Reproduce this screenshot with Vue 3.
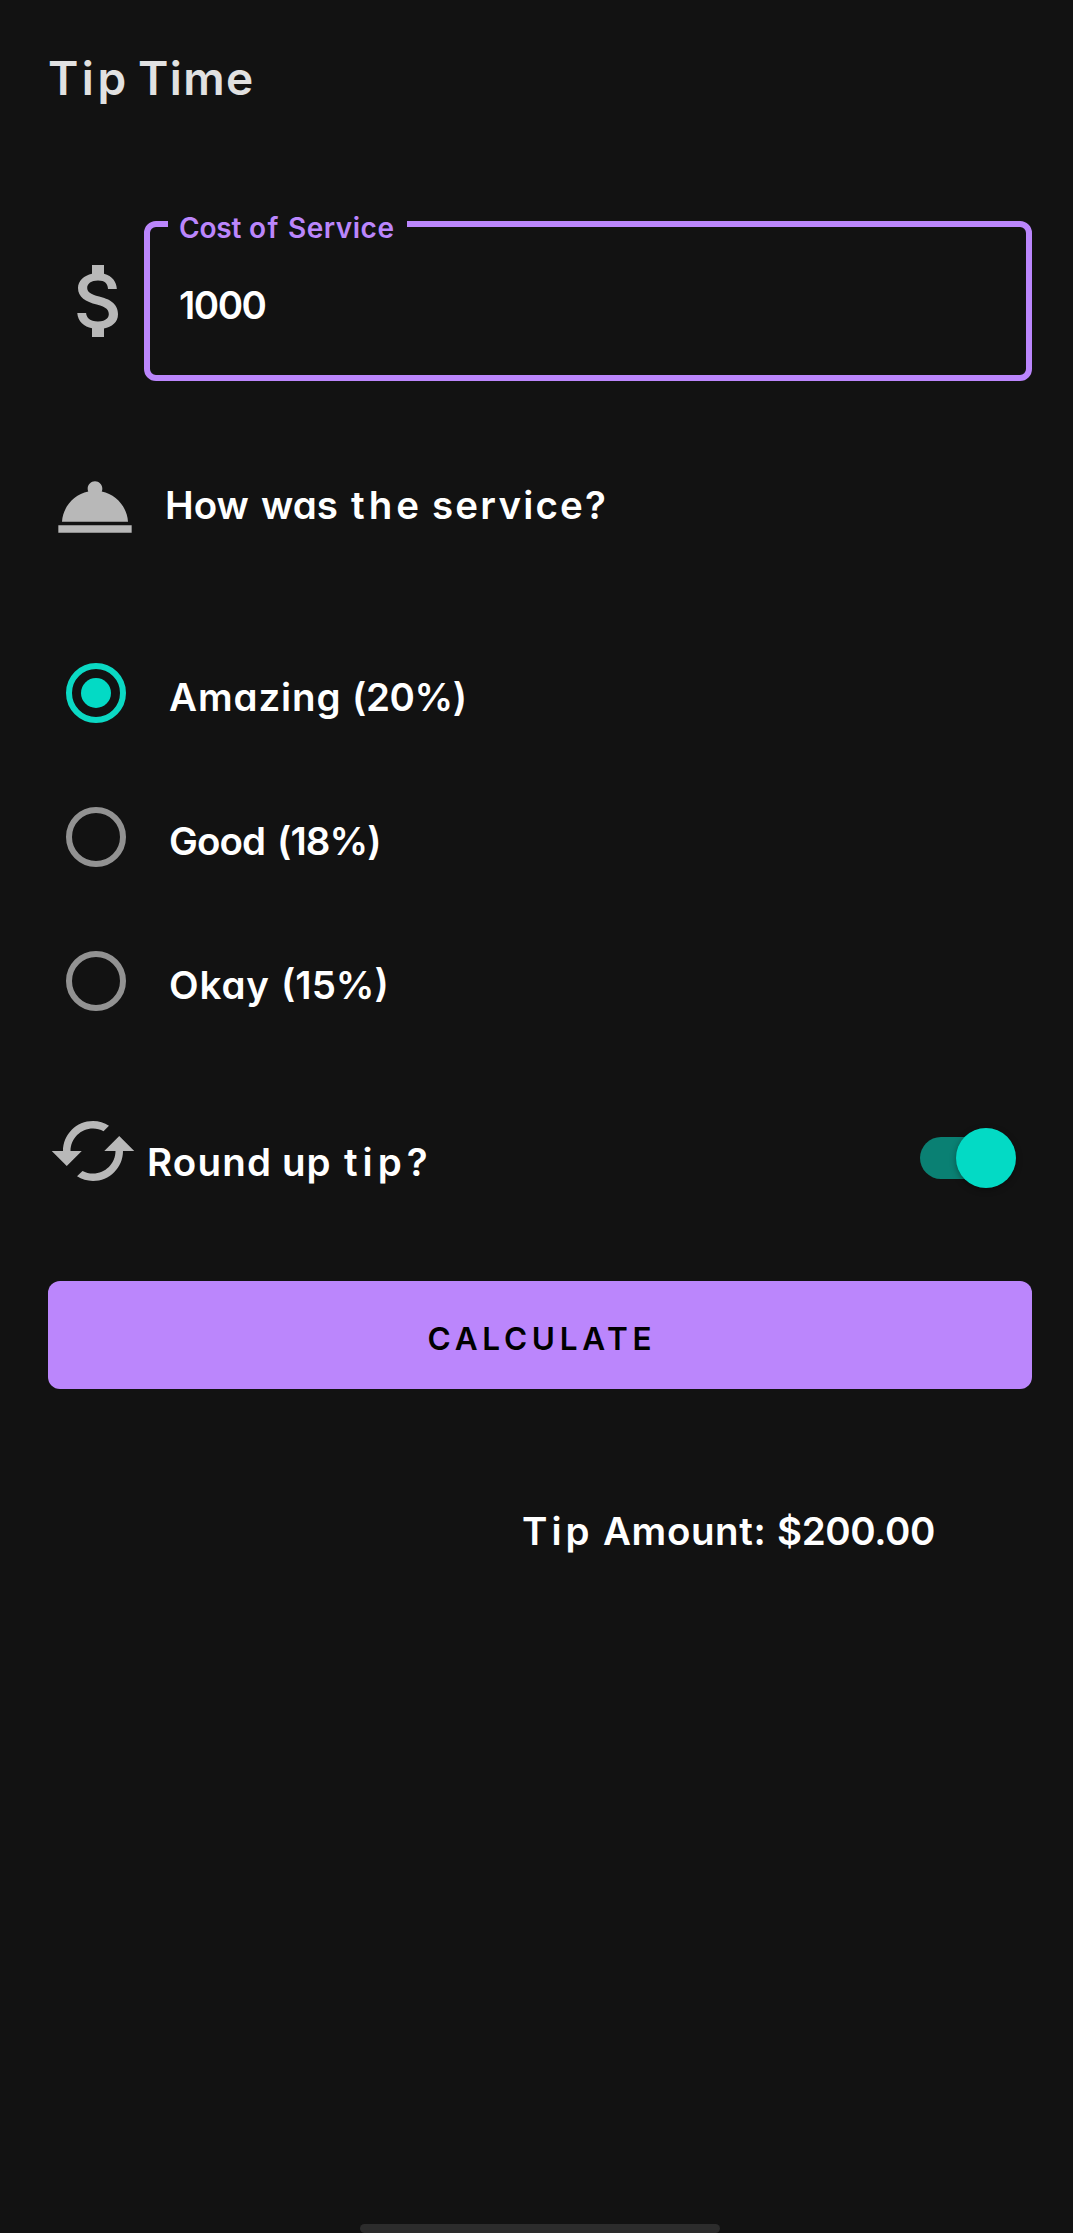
<script setup>
import { ref, h } from 'vue'

// Each word carries its tracking (ls) and the advance to the next word (w).
const Words = (props) =>
  h(
    'span',
    { class: 'words' },
    props.items.map((word, i) => [
      h(
        'span',
        {
          style: {
            display: 'inline-block',
            letterSpacing: `${word.ls}px`,
            width: word.w ? `${word.w}px` : 'auto'
          }
        },
        word.t + (i < props.items.length - 1 ? ' ' : '')
      )
    ])
  )
Words.props = ['items']

const title = [{ t: 'Tip', ls: 3.5, w: 90 }, { t: 'Time', ls: 1.4 }]
const label = [{ t: 'Cost', ls: -0.2, w: 70 }, { t: 'of', ls: 1.5, w: 39 }, { t: 'Service', ls: 0.5 }]
const question = [
  { t: 'How', ls: 0, w: 96 },
  { t: 'was', ls: 0, w: 90 },
  { t: 'the', ls: 4, w: 81 },
  { t: 'service?', ls: 2.2 }
]
const options = [
  { id: 'amazing', words: [{ t: 'Amazing', ls: 0.9, w: 183 }, { t: '(20%)', ls: -0.4 }] },
  { id: 'good', words: [{ t: 'Good', ls: -0.9, w: 108 }, { t: '(18%)', ls: -0.9 }] },
  { id: 'okay', words: [{ t: 'Okay', ls: 0.9, w: 112 }, { t: '(15%)', ls: 0 }] }
]
const roundUp = [{ t: 'Round', ls: 1.2, w: 135 }, { t: 'up', ls: 1, w: 62 }, { t: 'tip?', ls: 5 }]
const result = [
  { t: 'Tip', ls: 4, w: 81 },
  { t: 'Amount:', ls: 0.6, w: 174 },
  { t: '$200.00', ls: -0.4 }
]

const selected = ref('amazing')
const rounded = ref(true)
</script>

<template>
  <main class="screen">
    <h1 class="title"><Words :items="title" /></h1>

    <section class="cost">
      <svg class="dollar" viewBox="0 0 24 24">
        <path d="M11.8 10.9c-2.27-.59-3-1.2-3-2.15 0-1.09 1.01-1.85 2.7-1.85 1.78 0 2.44.85 2.5 2.1h2.21c-.07-1.72-1.12-3.3-3.21-3.81V3h-3v2.16c-1.94.42-3.5 1.68-3.5 3.61 0 2.31 1.91 3.46 4.7 4.13 2.5.6 3 1.48 3 2.41 0 .69-.49 1.79-2.7 1.79-2.06 0-2.87-.92-2.98-2.1h-2.2c.12 2.19 1.76 3.42 3.68 3.83V21h3v-2.15c1.95-.37 3.5-1.5 3.5-3.55 0-2.84-2.43-3.81-4.7-4.4z" />
      </svg>
      <div class="field">
        <span class="label"><Words :items="label" /></span>
        <span class="value">1000</span>
      </div>
    </section>

    <section class="service">
      <svg class="bell" viewBox="0 0 24 24">
        <path d="M2 17h20v2H2zM13.84 7.79c.1-.24.16-.51.16-.79 0-1.1-.9-2-2-2s-2 .9-2 2c0 .28.06.55.16.79C6.25 8.6 3.27 11.93 3 16h18c-.27-4.07-3.25-7.4-7.16-8.21z" />
      </svg>
      <span class="question"><Words :items="question" /></span>
    </section>

    <section class="options">
      <div v-for="o in options" :key="o.id" class="option" @click="selected = o.id">
        <span class="radio" :class="{ on: selected === o.id }"></span>
        <span class="option-text"><Words :items="o.words" /></span>
      </div>
    </section>

    <section class="round">
      <svg class="cycle" viewBox="0 0 24 24">
        <path d="M19 8l-4 4h3c0 3.31-2.69 6-6 6-1.01 0-1.97-.25-2.8-.7l-1.46 1.46C8.97 19.54 10.43 20 12 20c4.42 0 8-3.58 8-8h3l-4-4zM6 12c0-3.31 2.69-6 6-6 1.01 0 1.97.25 2.8.7l1.46-1.46C15.03 4.46 13.57 4 12 4c-4.42 0-8 3.58-8 8H1l4 4 4-4H6z" />
      </svg>
      <span class="round-text"><Words :items="roundUp" /></span>
      <span class="switch" :class="{ on: rounded }" @click="rounded = !rounded">
        <span class="thumb"></span>
      </span>
    </section>

    <button class="calculate">CALCULATE</button>

    <p class="result"><Words :items="result" /></p>

    <div class="handle"></div>
  </main>
</template>

<style>
body {
  background: #121212;
}
</style>

<style scoped>
.screen {
  display: flex;
  flex-direction: column;
  box-sizing: border-box;
  width: 1073px;
  height: 2233px;
  overflow: hidden;
  padding: 0 41px 0 48px;
  background: #121212;
  color: #fff;
  font: 600 38.5px Inter, 'Open Sans', sans-serif;
  font-feature-settings: 'cv11';
  white-space: nowrap;
}
svg {
  flex: none;
  fill: #b8b8b8;
}
.title {
  margin: 0;
  height: 156px;
  line-height: 156px;
  font-size: 46px;
  font-weight: 600;
  color: #e1e1e1;
}
.cost {
  display: flex;
  align-items: center;
  height: 160px;
  margin-top: 65px;
}
.dollar {
  width: 96px;
  height: 96px;
  margin-left: 4px;
}
.field {
  position: relative;
  flex: 1;
  box-sizing: border-box;
  height: 160px;
  margin-left: -4px;
  padding-left: 29px;
  border: 6px solid #bb86fc;
  border-radius: 12px;
}
.label {
  position: absolute;
  left: 18px;
  top: -20px;
  box-sizing: border-box;
  width: 239px;
  padding-left: 11px;
  background: #121212;
  color: #bb86fc;
  font-size: 28px;
  font-weight: 600;
  line-height: 42px;
}
.value {
  display: block;
  line-height: 156px;
  letter-spacing: -1.5px;
}
.service {
  display: flex;
  height: 88px;
  margin-top: 82px;
}
.bell {
  width: 88px;
  height: 88px;
  margin-left: 3px;
}
.question {
  margin-left: 26px;
  line-height: 84px;
}
.options {
  margin-top: 70px;
}
.option {
  display: flex;
  align-items: center;
  height: 144px;
}
.radio {
  display: flex;
  align-items: center;
  justify-content: center;
  box-sizing: border-box;
  width: 60px;
  height: 60px;
  margin-left: 18px;
  border: 6px solid #929292;
  border-radius: 50%;
}
.radio.on {
  border-color: #0bd9c4;
}
.radio.on::after {
  content: '';
  width: 30px;
  height: 30px;
  border-radius: 50%;
  background: #03dac5;
}
.option-text {
  margin-left: 43px;
  padding-top: 8px;
}
.round {
  display: flex;
  align-items: center;
  height: 210px;
}
.cycle {
  width: 90px;
  height: 90px;
  margin-top: -15px;
}
.round-text {
  margin-left: 9px;
  padding-top: 8px;
}
.switch {
  display: flex;
  align-items: center;
  width: 88px;
  height: 42px;
  margin: 0 24px 0 auto;
  border-radius: 21px;
  background: #454545;
}
.switch.on {
  justify-content: flex-end;
  background: #0a8073;
}
.thumb {
  width: 60px;
  height: 60px;
  margin-right: -8px;
  border-radius: 50%;
  background: #03dac5;
  box-shadow: 0 2px 6px rgba(0, 0, 0, 0.35);
}
.calculate {
  flex: none;
  height: 108px;
  margin-top: 18px;
  padding: 6px 0 0 4px;
  border: 0;
  border-radius: 12px;
  background: #bb86fc;
  color: #000;
  font: 600 31.5px Inter, 'Open Sans', sans-serif;
  letter-spacing: 4.7px;
}
.result {
  margin: 0 0 0 474px;
  line-height: 284px;
}
.handle {
  width: 360px;
  height: 9px;
  margin: auto 0 0 312px;
  border-radius: 5px;
  background: #2c2c2c;
}
</style>
